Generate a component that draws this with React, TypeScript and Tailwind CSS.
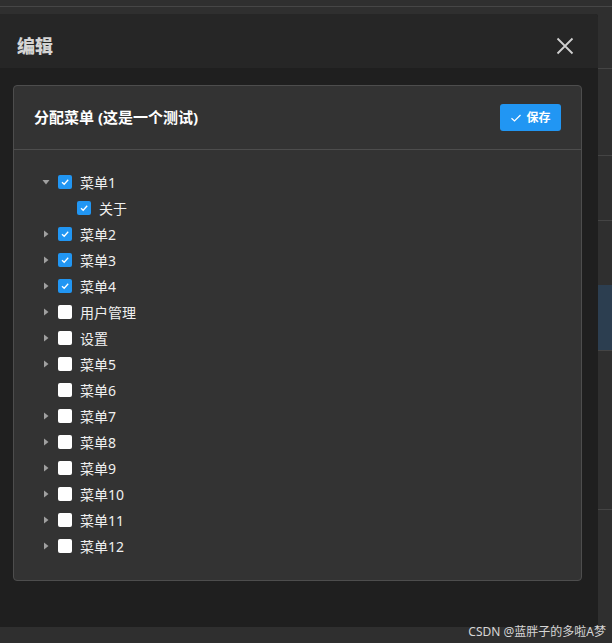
import { FC } from 'react';

interface MenuNode {
  label: string;
  checked: boolean;
  expandable?: boolean;
  expanded?: boolean;
  children?: MenuNode[];
}

const TREE: MenuNode[] = [
  { label: '菜单1', checked: true, expandable: true, expanded: true, children: [{ label: '关于', checked: true }] },
  { label: '菜单2', checked: true, expandable: true },
  { label: '菜单3', checked: true, expandable: true },
  { label: '菜单4', checked: true, expandable: true },
  { label: '用户管理', checked: false, expandable: true },
  { label: '设置', checked: false, expandable: true },
  { label: '菜单5', checked: false, expandable: true },
  { label: '菜单6', checked: false },
  { label: '菜单7', checked: false, expandable: true },
  { label: '菜单8', checked: false, expandable: true },
  { label: '菜单9', checked: false, expandable: true },
  { label: '菜单10', checked: false, expandable: true },
  { label: '菜单11', checked: false, expandable: true },
  { label: '菜单12', checked: false, expandable: true },
];

const FONT = "font-['Noto_Sans','Noto_Sans_CJK_SC',sans-serif]";

const Caret: FC<{ show?: boolean; down?: boolean }> = ({ show, down }) => (
  <span className="w-[12px] h-[12px] flex items-center justify-center">
    {show && (
      <svg width="8" height="8" viewBox="0 0 8 8" className={down ? 'rotate-90' : ''}>
        <path d="M2 0.5 L6.5 4 L2 7.5 Z" fill="#a0a0a0" />
      </svg>
    )}
  </span>
);

const Checkbox: FC<{ checked: boolean }> = ({ checked }) =>
  checked ? (
    <span className="ml-[6px] w-[14px] h-[14px] rounded-[2px] bg-[#2196f3] flex items-center justify-center">
      <svg width="10" height="10" viewBox="0 0 10 10">
        <path d="M2 5.2 L4.2 7.3 L8.2 2.8" stroke="#fff" strokeWidth="1.3" fill="none" />
      </svg>
    </span>
  ) : (
    <span className="ml-[6px] block w-[14px] h-[14px] rounded-[2px] bg-white" />
  );

const TreeRow: FC<{ node: MenuNode; depth: number }> = ({ node, depth }) => (
  <>
    <div className="h-[26px] flex items-center" style={{ paddingLeft: depth * 19 }}>
      <Caret show={node.expandable} down={node.expanded} />
      <Checkbox checked={node.checked} />
      <span className="ml-[8px] text-[14px] text-[#f0f0f0]">{node.label}</span>
    </div>
    {node.expanded && node.children?.map((c) => <TreeRow key={c.label} node={c} depth={depth + 1} />)}
  </>
);

export default function App() {
  return (
    <div className={`relative w-[612px] h-[643px] overflow-hidden bg-[#2f2f2f] ${FONT}`}>
      {/* page behind the dialog */}
      <div className="h-[7px] border-b border-[#464646]" />
      <div className="flex flex-col ml-[598px] mt-[61px]">
        <div className="h-[87px] border-t border-[#444]" />
        <div className="h-[65px] border-t border-[#444]" />
        <div className="h-[65px] border-t border-[#444]" />
        <div className="h-[65px] bg-[#2c3e50]" />
        <div className="h-[65px] border-t border-[#444]" />
        <div className="h-[95px] border-b border-[#444]" />
      </div>

      {/* dialog */}
      <div className="absolute left-0 top-[14px] w-[598px] h-[613px] bg-[#1f1f1f] rounded-tr-[3px] flex flex-col">
        <div className="h-[54px] bg-[#262626] rounded-tr-[3px] pt-[10px] pl-[17px] pr-[24px] flex items-center justify-between">
          <span className="text-[18px] font-extrabold text-[#d4d4d4]">编辑</span>
          <svg width="18" height="18" viewBox="0 0 18 18">
            <path d="M1.5 1.5 L16.5 16.5 M16.5 1.5 L1.5 16.5" stroke="#d0d0d0" strokeWidth="1.8" />
          </svg>
        </div>

        <div className="pt-[17px] pl-[13px] pr-[16px]">
          <div className="h-[496px] bg-[#333333] border border-[#4d4d4d] rounded-[4px] flex flex-col">
            <div className="h-[64px] border-b border-[#4d4d4d] pl-[20px] pr-[20px] flex items-center justify-between">
              <span className="text-[15px] font-bold text-white">分配菜单 (这是一个测试)</span>
              <button
                type="button"
                className="w-[61px] h-[27px] rounded-[3px] bg-[#2196f3] text-white text-[12px] font-bold flex items-center justify-center gap-[4px]"
              >
                <svg width="12" height="12" viewBox="0 0 12 12">
                  <path d="M1.5 6.3 L4.5 9 L10.5 3" stroke="#fff" strokeWidth="1.2" fill="none" />
                </svg>
                保存
              </button>
            </div>
            <div className="pt-[19px] pl-[26px] flex flex-col">
              {TREE.map((n) => (
                <TreeRow key={n.label} node={n} depth={0} />
              ))}
            </div>
          </div>
        </div>
      </div>

      {/* watermark */}
      <div className="absolute right-[6px] bottom-[5px] text-[12px] text-[#d6d6d6] leading-none">
        CSDN @蓝胖子的多啦A梦
      </div>
    </div>
  );
}
